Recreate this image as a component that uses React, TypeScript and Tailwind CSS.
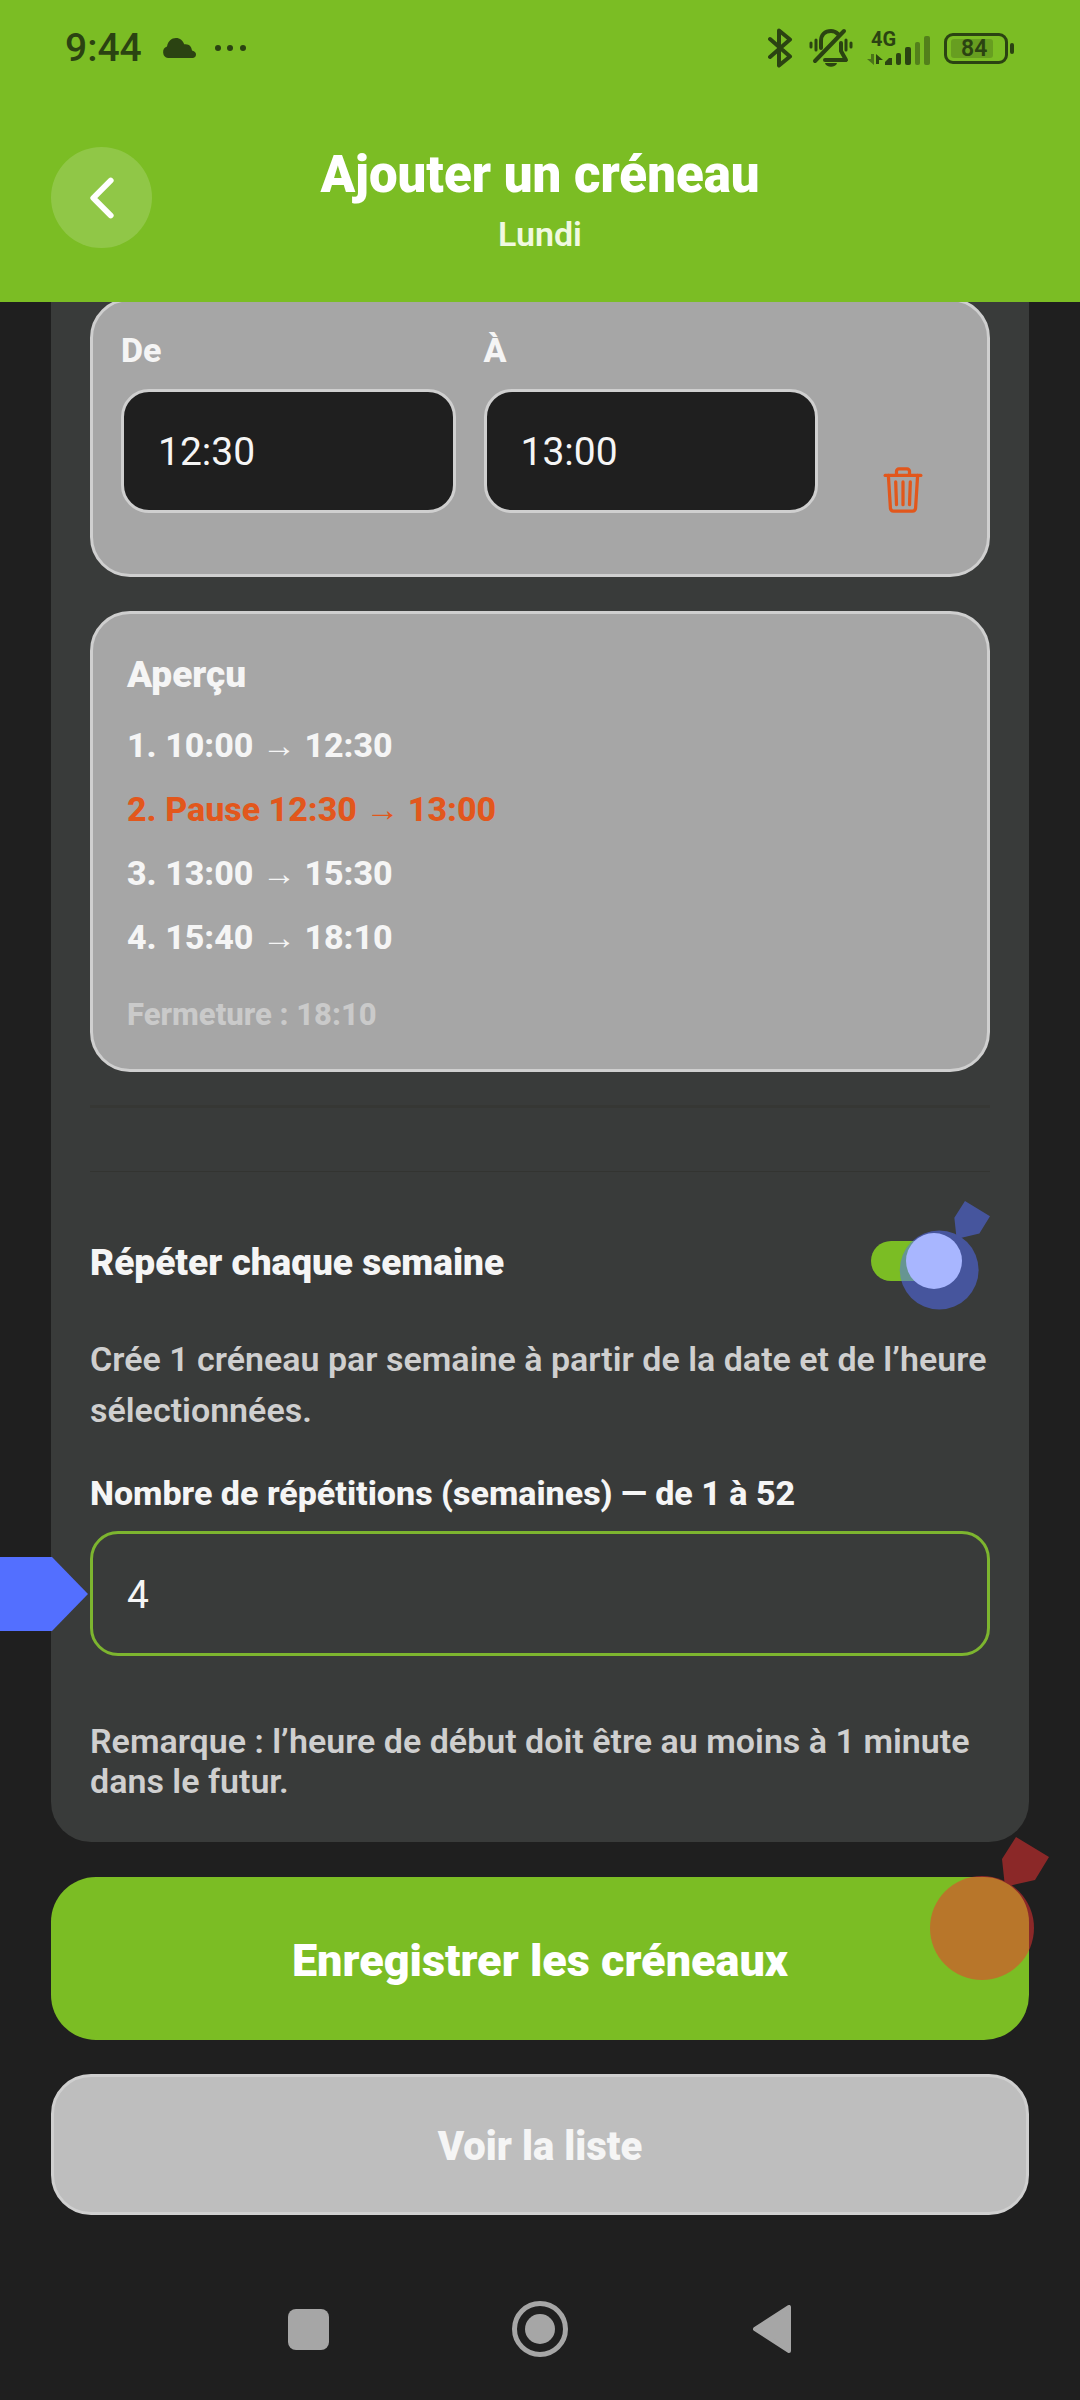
import React, { useState } from 'react'
import { IoChevronBack, IoTrashOutline } from 'react-icons/io5'

const slots = [
    { label: '10:00 → 12:30', pause: false },
    { label: 'Pause 12:30 → 13:00', pause: true },
    { label: '13:00 → 15:30', pause: false },
    { label: '15:40 → 18:10', pause: false },
]

function StatusBar() {
    return (
        <div className="flex h-24 items-center justify-between pl-[65px] pr-[66px] text-[#2b4312]">
            <div className="flex items-center">
                <span className="text-[39px] font-medium leading-[46px]">9:44</span>
                {/* Cloud */}
                <svg width="34" height="20" viewBox="0 0 34 20" className="ml-5" fill="currentColor">
                    <path d="M6 20a6 6 0 0 1-1-11.500C6 3 9.500 0 14 0c4 0 7 2.500 8.200 6.300C27 5.500 29.500 8.500 30 12.500c3 .5 4 2.500 4 4 0 2-1.500 3.500-3.500 3.500z" />
                </svg>
                {/* More notifications */}
                <svg width="32" height="8" viewBox="0 0 32 8" className="ml-[18px]" fill="currentColor">
                    <circle cx="4" cy="4" r="3" />
                    <circle cx="16" cy="4" r="3" />
                    <circle cx="29" cy="4" r="3" />
                </svg>
            </div>

            <div className="flex items-center">
                {/* Bluetooth */}
                <svg width="25" height="40" viewBox="0 0 25 40" fill="none" stroke="currentColor" strokeWidth="4" strokeLinejoin="round" strokeLinecap="round">
                    <path d="M2 11l20 17.500-11 9V2.500l11 9L2 29" />
                </svg>

                {/* Muted bell */}
                <svg width="44" height="40" viewBox="0 0 44 40" className="ml-4" fill="none" stroke="currentColor" strokeWidth="3" strokeLinecap="round" strokeLinejoin="round">
                    <path d="M2 15v4M7 12v10M37 12v10M42 15v4" />
                    <path d="M12 20v-7c0-6 4-10 10-10 3 0 5 1 7 3" strokeWidth="4" />
                    <path d="M35 3L6 33" strokeWidth="4" />
                    <path d="M32 15v8l5 9H16" strokeWidth="4" />
                    <path d="M16 35h12c-1 5-11 5-12 0z" fill="currentColor" stroke="none" />
                </svg>

                {/* Mobile network */}
                <div className="relative ml-[14px] h-[34px] w-[63px]">
                    <span className="absolute -top-1 left-1 text-[20px] font-bold leading-6">4G</span>
                    <svg width="63" height="34" viewBox="0 0 63 34" fill="currentColor">
                        <path d="M4 23h3v11L0 28h4z" opacity=".6" />
                        <path d="M9 33V23l7 6h-4v4z" />
                        <path d="M18 31l4-4h3v7h-7z" />
                        <rect x="29" y="22" width="5" height="12" rx="2" />
                        <rect x="38" y="16" width="6" height="18" rx="2" />
                        <rect x="48" y="11" width="5" height="23" rx="2" opacity=".5" />
                        <rect x="57" y="5" width="6" height="29" rx="2" opacity=".5" />
                    </svg>
                </div>

                {/* Battery */}
                <div className="ml-[14px] flex items-center">
                    <div className="flex h-[31px] w-16 items-center rounded-[9px] border-3 border-current p-1">
                        <span className="w-[42px] rounded-[3px] bg-[#2b4312]/25 pl-[10px] text-[23px] font-semibold leading-[19px]">84</span>
                    </div>
                    <span className="ml-0.5 h-[11px] w-1 rounded-full bg-current" />
                </div>
            </div>
        </div>
    )
}

// Tap marker: a disc with a small pointer at its top right
function TapMarker({ className }: { className: string }) {
    return (
        <svg viewBox="0 0 120 144" className={className} fill="currentColor" aria-hidden="true">
            <circle cx="53" cy="91" r="52" />
            <path d="M87 0l33 20-14 23-22 5-8 2-3-28z" />
        </svg>
    )
}

export default function App() {
    const [from, setFrom] = useState('12:30')
    const [to, setTo] = useState('13:00')
    const [weekly, setWeekly] = useState(true)
    const [count, setCount] = useState('4')

    return (
        <div className="flex min-h-screen flex-col overflow-x-hidden bg-[#1f1f1f] font-[Roboto,'Liberation_Sans',sans-serif] text-[#f5f5f5]">
            <header className="relative z-10 bg-[#7bbd24] pb-12">
                <StatusBar />
                <div className="flex items-center justify-between px-[51px] pt-[45px]">
                    <button aria-label="Retour" className="flex size-[101px] items-center justify-center rounded-full bg-white/16 text-white">
                        <IoChevronBack size={62} />
                    </button>
                    <div className="pt-1 text-center">
                        <h1 className="text-[51px] font-black leading-[60px] text-white">Ajouter un créneau</h1>
                        <p className="mt-[9px] text-[34px] font-semibold leading-[40px] text-[#f0f9e0]">Lundi</p>
                    </div>
                    <div className="w-[101px]" />
                </div>
            </header>

            <main className="flex flex-col px-[51px]">
                <section className="rounded-b-[40px] bg-[#393b3a] px-[39px] pb-[41px]">
                    {/* Pause */}
                    <div className="-mt-1 flex items-end gap-7 rounded-[40px] border-3 border-[#cfcfcf] bg-[#a6a6a6] p-7">
                        <div className="mb-[33px] min-w-0 flex-1">
                            <label htmlFor="from" className="block text-[34px] font-extrabold leading-[42px]">De</label>
                            <input
                                id="from"
                                type="text"
                                value={from}
                                onChange={(e) => setFrom(e.target.value)}
                                className="mt-[18px] block h-[124px] w-full rounded-[28px] border-3 border-[#cfcfcf] bg-[#1f1f1f] px-[34px] pt-0.5 text-[39px]"
                            />
                        </div>
                        <div className="mb-[33px] min-w-0 flex-1">
                            <label htmlFor="to" className="block text-[34px] font-extrabold leading-[42px]">À</label>
                            <input
                                id="to"
                                type="text"
                                value={to}
                                onChange={(e) => setTo(e.target.value)}
                                className="mt-[18px] block h-[124px] w-full rounded-[28px] border-3 border-[#cfcfcf] bg-[#1f1f1f] px-[34px] pt-0.5 text-[39px]"
                            />
                        </div>
                        <button aria-label="Supprimer" className="flex size-[113px] items-center justify-center text-[#e2571c]">
                            <IoTrashOutline size={52} />
                        </button>
                    </div>

                    {/* Preview */}
                    <div className="mt-[34px] rounded-[40px] border-3 border-[#cfcfcf] bg-[#a6a6a6] p-[34px]">
                        <h2 className="text-[37px] font-black leading-[54px]">Aperçu</h2>
                        <ol className="mt-[11px] text-[34px] font-extrabold leading-[64px]">
                            {slots.map((slot, i) => (
                                <li key={slot.label} className={slot.pause ? 'text-[#e2571c]' : ''}>
                                    {i + 1}. {slot.label}
                                </li>
                            ))}
                        </ol>
                        <p className="mt-[26px] text-[31px] font-extrabold leading-[40px] text-[#cacaca]">Fermeture : 18:10</p>
                    </div>

                    <hr className="mt-[33px] h-[3px] border-0 bg-[#363734]" />
                    <hr className="mt-[63px] h-px border-0 bg-[#333431]" />

                    {/* Weekly repeat */}
                    <div className="mt-[61px] flex h-14 items-center justify-between">
                        <label htmlFor="weekly" className="pt-1 text-[37px] font-black leading-[44px]">Répéter chaque semaine</label>
                        <label className="relative mr-7 flex h-14 w-[91px] items-center">
                            <input
                                id="weekly"
                                type="checkbox"
                                role="switch"
                                checked={weekly}
                                onChange={(e) => setWeekly(e.target.checked)}
                                className="peer sr-only"
                            />
                            <span className="h-10 w-[85px] rounded-full bg-gray-500 peer-checked:bg-[#7bbd24]" />
                            <span className="absolute left-0 size-14 rounded-full bg-white peer-checked:left-[35px]" />
                            <TapMarker className="absolute -top-8 left-7 w-[91px] text-[#536fff] opacity-50" />
                        </label>
                    </div>
                    <p className="mt-[45px] text-[34px] font-semibold leading-[51px] text-[#cfcfcf]">
                        Crée 1 créneau par semaine à partir de la date et de l’heure sélectionnées.
                    </p>

                    <label htmlFor="count" className="mt-[36px] block text-[34px] font-extrabold leading-[42px]">
                        Nombre de répétitions (semaines) — de 1 à 52
                    </label>
                    <div className="relative mt-[17px]">
                        <input
                            id="count"
                            type="text"
                            inputMode="numeric"
                            value={count}
                            onChange={(e) => setCount(e.target.value)}
                            className="block h-[125px] w-full rounded-[28px] border-3 border-[#7db52f] px-[34px] pt-0.5 text-[39px]"
                        />
                        <svg width="88" height="74" viewBox="0 0 88 74" className="absolute -left-[90px] top-[26px] text-[#536fff]" fill="currentColor" aria-hidden="true">
                            <path d="M0 0h52l36 37-36 37H0z" />
                        </svg>
                    </div>

                    <p className="mt-[65px] text-[34px] font-semibold leading-[40px] text-[#cfcfcf]">
                        Remarque : l’heure de début doit être au moins à 1 minute dans le futur.
                    </p>
                </section>

                {/* Actions */}
                <button className="relative mt-[35px] h-[163px] rounded-[45px] bg-[#7bbd24] pt-1 text-[45px] font-black text-white">
                    Enregistrer les créneaux
                    <TapMarker className="absolute -right-5 -top-10 w-[120px] text-[#f63131] opacity-50" />
                </button>
                <button className="mt-[34px] h-[141px] rounded-[40px] border-3 border-[#cfcfcf] bg-[#bebebe] pt-1 text-[40px] font-black">
                    Voir la liste
                </button>
            </main>

            {/* System navigation */}
            <nav className="mt-auto grid h-[142px] grid-cols-3 place-items-center px-48 text-[#a6a6a6]">
                <button aria-label="Applications récentes" className="size-[41px] rounded-lg bg-current" />
                <button aria-label="Accueil" className="flex size-14 items-center justify-center rounded-full border-5 border-current">
                    <span className="size-[30px] rounded-full bg-current" />
                </button>
                <button aria-label="Précédent">
                    <svg width="38" height="48" viewBox="0 0 38 48" fill="currentColor" stroke="currentColor" strokeWidth="4" strokeLinejoin="round">
                        <path d="M2 24L36 2v44z" />
                    </svg>
                </button>
            </nav>
        </div>
    )
}
